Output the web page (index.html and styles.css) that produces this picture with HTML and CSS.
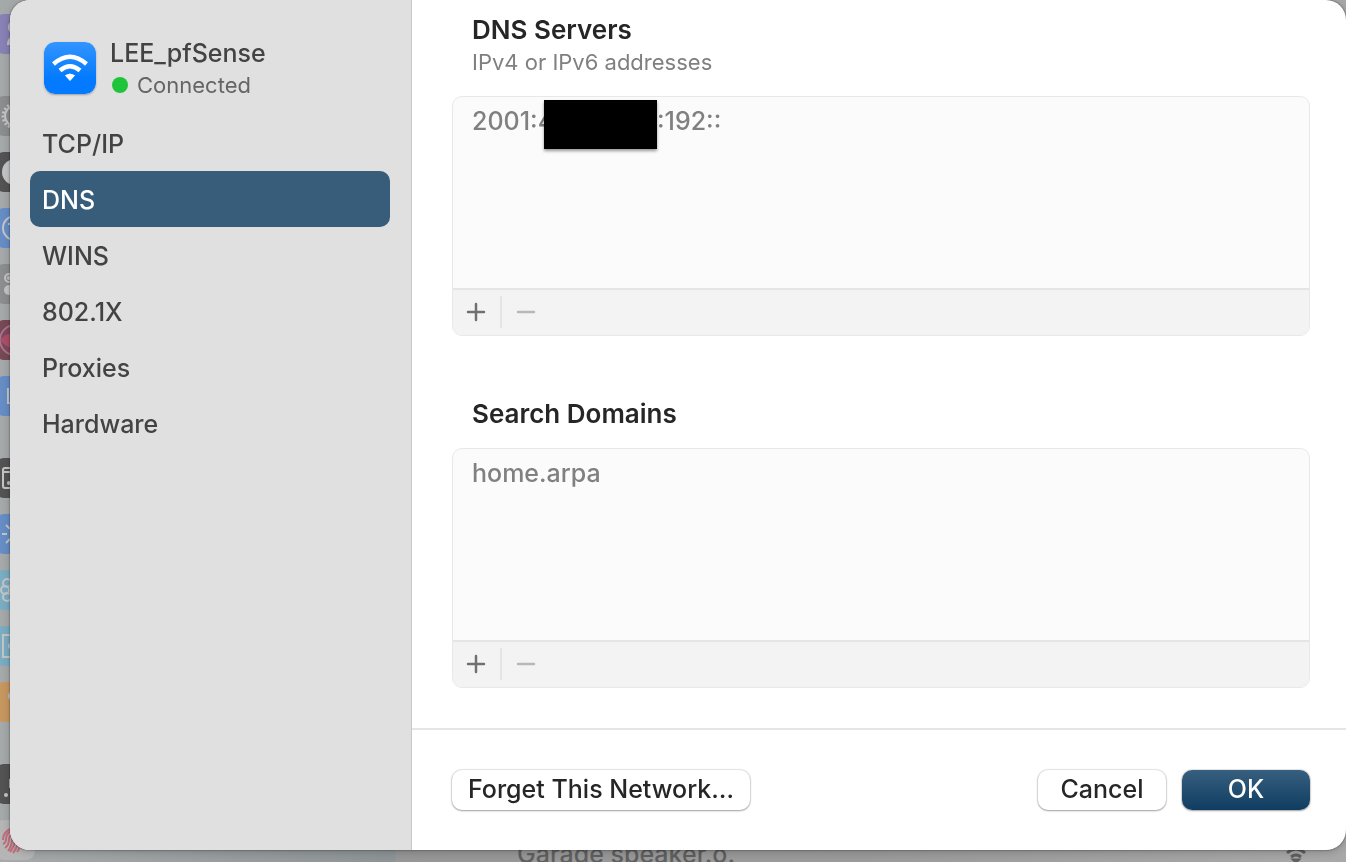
FILE: index.html
```html
<!DOCTYPE html>
<html lang="en">
<head>
  <meta charset="UTF-8">
  <meta name="viewport" content="width=device-width, initial-scale=1.0">
  <title>Network Details</title>
  <link rel="stylesheet" href="styles.css">
</head>
<body>
  <!-- dimmed settings window behind the sheet -->
  <div class="backdrop" aria-hidden="true">
    <div class="backdrop-icons">
      <svg class="tile purple" viewBox="0 0 40 40"><circle cx="20" cy="13" r="7"/><path d="M12 31q0-9 8-9t8 9z"/></svg>
      <svg class="tile gray group" viewBox="0 0 40 40"><circle class="teeth" cx="20" cy="20" r="12"/><circle class="line" cx="20" cy="20" r="10"/></svg>
      <svg class="tile dark" viewBox="0 0 40 40"><circle cx="20" cy="20" r="13"/></svg>
      <svg class="tile blue" viewBox="0 0 40 40"><circle class="line" cx="20" cy="20" r="12"/><path class="line" d="M13 16h4v8"/></svg>
      <svg class="tile gray" viewBox="0 0 40 40"><circle class="line" cx="14" cy="14" r="4"/><circle cx="14" cy="14" r="2"/><circle cx="14" cy="26" r="5"/></svg>
      <svg class="tile siri" viewBox="0 0 40 40"><circle class="ring" cx="20" cy="20" r="15"/><path class="glow" d="M5 20q8-9 15-5v12q-7 3-15-7z"/></svg>
      <svg class="tile blue" viewBox="0 0 40 40"><path class="line" d="M13 12v15h14V12"/></svg>
      <svg class="tile dark group" viewBox="0 0 40 40"><rect class="line" x="8" y="10" width="24" height="20" rx="2"/><path class="line" d="M8 14h24"/><circle cx="14" cy="25" r="2"/></svg>
      <svg class="tile blue" viewBox="0 0 40 40"><path class="line" d="M7 20h5M11 11l4 4M11 29l4-4"/></svg>
      <svg class="tile cyan" viewBox="0 0 40 40"><circle class="line" cx="12" cy="13" r="4"/><circle class="line" cx="10" cy="20" r="4"/><circle class="line" cx="12" cy="27" r="4"/></svg>
      <svg class="tile cyan" viewBox="0 0 40 40"><rect class="line" x="8" y="9" width="24" height="22"/><circle cx="16" cy="20" r="3"/></svg>
      <svg class="tile orange" viewBox="0 0 40 40"><circle cx="18" cy="14" r="5"/></svg>
      <svg class="tile dark group" viewBox="0 0 40 40"><path d="M14 15h12v9H14z"/><circle cx="11" cy="31" r="2"/></svg>
      <svg class="tile touch" viewBox="0 0 40 40">
        <path d="M8 20a12 12 0 0 1 24 0M8 24q3-1 3-5a9 9 0 0 1 18 0q0 6-2 10M10 28q4-3 4-9a6 6 0 0 1 12 0q0 8-4 13M13 31q4-5 4-12a3 3 0 0 1 6 0q0 8-5 14M20 19q0 7-5 13"/>
      </svg>
    </div>
    <div class="backdrop-row">
      <span>Garage speaker.o.</span>
      <svg class="backdrop-wifi" viewBox="0 0 24 18"><path d="M3 7q9-8 18 0M7 11q5-4 10 0"/><path d="M10 14h4l-2 2z"/></svg>
    </div>
  </div>

  <div class="sheet" role="dialog" aria-label="Network details">
    <aside class="sidebar">
      <div class="network">
        <svg class="wifi-icon" viewBox="0 0 52 52" aria-hidden="true">
          <defs>
            <linearGradient id="wifi-bg" x1="0" y1="0" x2="0" y2="1">
              <stop offset="0" stop-color="#3395ff"/>
              <stop offset="0.7" stop-color="#037aff"/>
              <stop offset="1" stop-color="#037aff"/>
            </linearGradient>
          </defs>
          <rect width="52" height="52" rx="11" fill="url(#wifi-bg)"/>
          <path d="M9.500 22Q26 7.500 42.500 22M16 28.500Q26 20 36 28.500" fill="none" stroke="#fff" stroke-width="4.400"/>
          <path d="M21.500 33.500q4.500-3 9 0l-4.500 5z" fill="#fff" stroke="#fff" stroke-width="1" stroke-linejoin="round"/>
        </svg>
        <div>
          <div class="network-name">LEE_pfSense</div>
          <div class="network-status"><span class="dot"></span>Connected</div>
        </div>
      </div>
      <nav class="menu">
        <a href="#tcpip">TCP/IP</a>
        <a href="#dns" class="active" aria-current="page">DNS</a>
        <a href="#wins">WINS</a>
        <a href="#8021x">802.1X</a>
        <a href="#proxies">Proxies</a>
        <a href="#hardware">Hardware</a>
      </nav>
    </aside>

    <main class="main">
      <div class="content">
        <section class="section">
          <div class="section-head">
            <h2>DNS Servers</h2>
            <p>IPv4 or IPv6 addresses</p>
          </div>
          <div class="list-box">
            <ul class="list">
              <li><span class="address-start">2001:4</span><span class="redacted"></span><span>:192::</span></li>
            </ul>
            <div class="list-tools">
              <button type="button" aria-label="Add DNS server"><svg viewBox="0 0 20 20"><path d="M2 10h16M10 2v16"/></svg></button>
              <button type="button" aria-label="Remove DNS server" disabled><svg viewBox="0 0 20 20"><path d="M2 10h16"/></svg></button>
            </div>
          </div>
        </section>

        <section class="section">
          <div class="section-head">
            <h2>Search Domains</h2>
          </div>
          <div class="list-box">
            <ul class="list">
              <li>home.arpa</li>
            </ul>
            <div class="list-tools">
              <button type="button" aria-label="Add search domain"><svg viewBox="0 0 20 20"><path d="M2 10h16M10 2v16"/></svg></button>
              <button type="button" aria-label="Remove search domain" disabled><svg viewBox="0 0 20 20"><path d="M2 10h16"/></svg></button>
            </div>
          </div>
        </section>
      </div>

      <footer class="footer">
        <button type="button" class="btn">Forget This Network…</button>
        <div class="footer-right">
          <button type="button" class="btn">Cancel</button>
          <button type="button" class="btn btn-primary">OK</button>
        </div>
      </footer>
    </main>
  </div>
</body>
</html>
```

FILE: styles.css
```css
* {
  box-sizing: border-box;
}
body {
  margin: 0;
  height: 100vh;
  padding: 0 0 12px 10px;
  overflow: hidden;
  font-family: Inter, "Liberation Sans", sans-serif;
  font-size: 25px;
  font-weight: 450;
  line-height: 32px;
  color: #262626;
  background-color: #a0a3a4;
}
h2, p, ul {
  margin: 0;
  padding: 0;
}

/* Backdrop */
.backdrop {
  position: fixed;
  inset: 0;
  overflow: hidden;
  background: linear-gradient(to right, #a5a9aa 0, #8d9395 395px, #969696 396px, #9b9b9b 900px, #a8a8a8 100%);
}
.backdrop-icons {
  position: absolute;
  top: 14px;
  left: -5px;
  display: flex;
  flex-direction: column;
  gap: 16px;
}
.tile {
  width: 40px;
  height: 40px;
  border-radius: 9px;
  fill: #c3c5c6;
}
.tile.group {
  margin-top: 26px;
}
.tile .line, .tile .teeth {
  fill: none;
  stroke: #c3c5c6;
  stroke-width: 2;
}
.tile .teeth {
  stroke-width: 3;
  stroke-dasharray: 2 2;
}
.purple { background-color: #8781b5; }
.gray { background-color: #8c8d8e; }
.dark { background-color: #535353; }
.blue { background-color: #668dc5; }
.cyan { background-color: #7aacc2; }
.orange { background-color: #c79760; }
.siri { background-color: #764954; }
.siri .ring {
  fill: #7d4860;
  stroke: #a8748a;
  stroke-width: 2;
}
.siri .glow {
  fill: #aa5068;
}
.touch {
  background-color: #b5b5b5;
}
.touch path {
  fill: none;
  stroke: #c06c7c;
  stroke-width: 2;
}
.backdrop-row {
  position: absolute;
  right: 38px;
  bottom: -8px;
  left: 517px;
  display: flex;
  justify-content: space-between;
  color: #5f5f5f;
}
.backdrop-wifi {
  width: 24px;
  height: 18px;
  margin-top: 8px;
  fill: none;
  stroke: #5f5f5f;
  stroke-width: 3;
}

/* Sheet */
.sheet {
  position: relative;
  display: flex;
  height: 100%;
  border-radius: 20px;
  overflow: hidden;
  background-color: #fff;
  box-shadow: 0 0 2px rgba(0, 0, 0, 0.6), 0 2px 8px rgba(0, 0, 0, 0.2);
}
.sidebar {
  flex: 0 0 402px;
  padding: 37px 21px 20px 20px;
  background-color: #e0e0e0;
  border-right: 1px solid #c8c8c8;
}
.network {
  display: flex;
  gap: 14px;
  padding-left: 14px;
}
.wifi-icon {
  width: 52px;
  height: 52px;
  margin-top: 5px;
  border-radius: 11px;
  box-shadow: 0 1px 2px rgba(0, 0, 0, 0.3);
}
.network-name {
  color: #434343;
}
.network-status {
  display: flex;
  align-items: center;
  gap: 9px;
  padding-left: 2px;
  font-size: 22px;
  font-weight: 400;
  color: #656565;
}
.dot {
  width: 16px;
  height: 16px;
  border-radius: 50%;
  background-color: #1fc43a;
}
.menu {
  margin-top: 14px;
}
.menu a {
  display: block;
  padding: 13px 12px 11px;
  border-radius: 10px;
  color: #434343;
  text-decoration: none;
}
.menu a.active {
  color: #fff;
  background-color: #385d7a;
}

/* Main panel */
.main {
  flex: 1;
  display: flex;
  flex-direction: column;
  min-width: 0;
}
.content {
  flex: 1;
  display: flex;
  flex-direction: column;
  gap: 62px;
  padding: 14px 36px 40px 40px;
}
.section-head {
  padding-left: 20px;
  margin-bottom: 18px;
}
.section-head h2 {
  font-size: 26px;
  font-weight: 600;
}
.section-head p {
  font-size: 22px;
  font-weight: 400;
  color: #808080;
}
.list-box {
  border: 1px solid #e8e8e8;
  border-radius: 10px;
  overflow: hidden;
  background-color: #fbfbfb;
}
.list {
  height: 191px;
  padding: 3px 19px;
  list-style: none;
  color: #808080;
}
.list li {
  display: flex;
  height: 49px;
  padding-top: 5px;
}
.address-start {
  width: 72px;
  white-space: nowrap;
}
.redacted {
  position: relative;
  width: 113px;
  height: 49px;
  margin-top: -5px;
  background-color: #000;
  box-shadow: 0 2px 3px rgba(0, 0, 0, 0.4);
}
.list-tools {
  display: flex;
  align-items: center;
  height: 47px;
  padding-bottom: 1px;
  border-top: 2px solid #e5e5e5;
  background-color: #f3f3f3;
}
.list-tools button {
  display: flex;
  align-items: center;
  justify-content: center;
  width: 49px;
  height: 32px;
  padding: 0 1px 0 0;
  border: none;
  background: none;
}
.list-tools button:first-child {
  border-right: 2px solid #e5e5e5;
}
.list-tools svg {
  width: 20px;
  height: 20px;
  fill: none;
  stroke: #707070;
  stroke-width: 2.5;
  stroke-linecap: round;
}
.list-tools button:disabled svg {
  stroke: #b8b8b8;
}

/* Footer */
.footer {
  display: flex;
  justify-content: space-between;
  padding: 40px 36px 40px 40px;
  border-top: 2px solid #e5e5e5;
}
.footer-right {
  display: flex;
  gap: 16px;
}
.btn {
  min-width: 128px;
  height: 40px;
  padding: 0 16px 2px;
  border: none;
  border-radius: 10px;
  font-family: inherit;
  font-size: 25px;
  font-weight: inherit;
  line-height: 38px;
  color: #262626;
  background-color: #fff;
  box-shadow: 0 0 1px 1px rgba(0, 0, 0, 0.1), 0 1px 2px rgba(0, 0, 0, 0.3);
}
.btn-primary {
  color: #fff;
  background: linear-gradient(#375f7f, #0f3d61);
}
```
